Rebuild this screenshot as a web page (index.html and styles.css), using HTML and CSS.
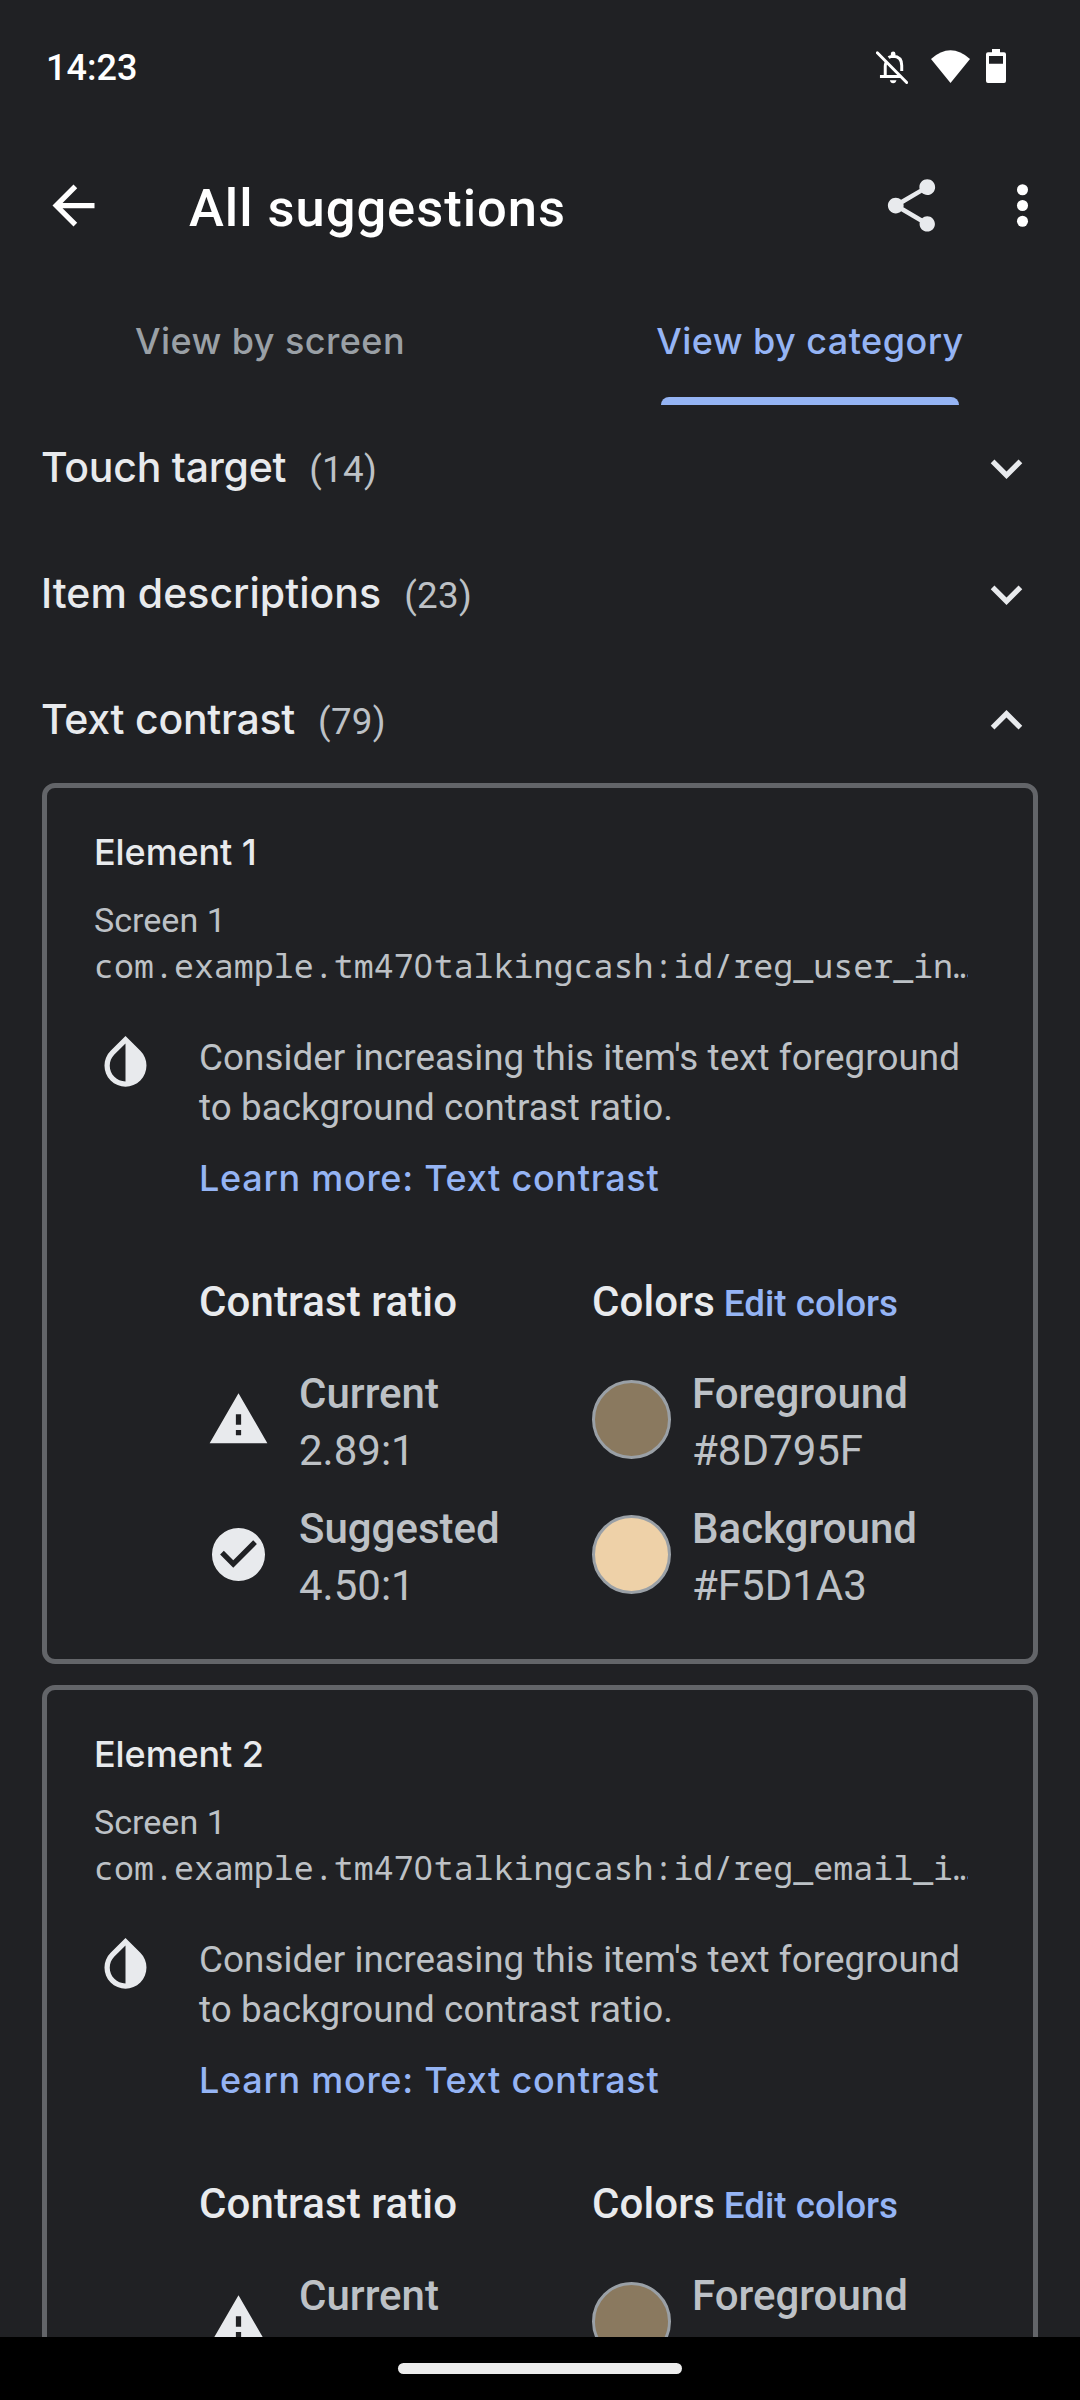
FILE: index.html
```html
<!DOCTYPE html>
<html lang="en">
<head>
<meta charset="utf-8">
<title>All suggestions</title>
<link rel="stylesheet" href="styles.css">
</head>
<body>
<svg width="0" height="0" class="symbols" aria-hidden="true">
  <symbol id="drop" viewBox="0 0 24 24"><path d="M17.66 7.93L12 2.27 6.34 7.93c-3.12 3.12-3.12 8.19 0 11.31C7.9 20.8 9.95 21.58 12 21.58s4.1-.78 5.66-2.34c3.12-3.12 3.12-8.19 0-11.31zM12 19.59c-1.6 0-3.11-.62-4.24-1.76C6.62 16.69 6 15.19 6 13.59s.62-3.11 1.76-4.24L12 5.1v14.49z"/></symbol>
  <symbol id="warning" viewBox="0 0 24 24"><path d="M1 21h22L12 2 1 21zm12-3h-2v-2h2v2zm0-4h-2v-4h2v4z"/></symbol>
  <symbol id="check" viewBox="0 0 24 24"><path fill-rule="evenodd" d="M12 1.9a10.1 10.1 0 1 0 0 20.200a10.1 10.1 0 1 0 0-20.200zM10 17l-5-5 1.410-1.410L10 14.170l7.590-7.590L19 8l-9 9z"/></symbol>
  <symbol id="expand" viewBox="0 0 24 24"><path d="M16.590 8.590L12 13.170 7.410 8.590 6 10l6 6 6-6z"/></symbol>
  <symbol id="collapse" viewBox="0 0 24 24"><path d="M12 8l-6 6 1.410 1.410L12 10.830l4.590 4.580L18 14z"/></symbol>
</svg>

<div class="phone">
  <header class="status">
    <span class="status__time">14:23</span>
    <svg class="status__bell" viewBox="108 92 97 99"><g fill="none" stroke="#fff" stroke-width="9"><path d="M112 97L201 187" stroke-linecap="round"/><path d="M136 166V138q0-7 3-13M120 168.500H184M146 111.500q6-4 14-4 26 1 26 28V152"/></g><path fill="#fff" d="M153 104v-4a7 7 0 0 1 14 0v4zM150 180h20q-2 9-10 9t-10-9z"/></svg>
    <svg class="status__wifi" viewBox="273 86 117 99"><path fill="#fff" d="M273 113Q331.500 61 390 113L331.500 185z"/></svg>
    <svg class="status__battery" viewBox="438 87 60 102"><path fill="#fff" fill-rule="evenodd" d="M456 87h24v10h12q6 0 6 6v80q0 6-6 6h-48q-6 0-6-6v-80q0-6 6-6h12zM447 108v23h42v-23z"/></svg>
  </header>

  <div class="appbar">
    <svg class="icon icon--white" viewBox="0 0 24 24"><path d="M20 11H7.830l5.590-5.590L12 4l-8 8 8 8 1.410-1.410L7.830 13H20v-2z"/></svg>
    <h1 class="appbar__title">All suggestions</h1>
    <svg class="icon" viewBox="0 0 24 24"><path d="M18 16.080c-.76 0-1.440.3-1.960.77L8.910 12.700c.05-.23.09-.46.09-.7s-.04-.47-.09-.7l7.050-4.110c.54.5 1.250.81 2.040.81 1.660 0 3-1.340 3-3s-1.340-3-3-3-3 1.340-3 3c0 .24.04.47.09.7L8.040 9.810C7.500 9.310 6.790 9 6 9c-1.660 0-3 1.340-3 3s1.340 3 3 3c.79 0 1.500-.31 2.040-.81l7.120 4.160c-.05.21-.08.43-.08.65 0 1.610 1.310 2.920 2.920 2.920s2.920-1.310 2.920-2.920-1.310-2.920-2.920-2.920z"/></svg>
    <svg class="icon icon--white icon--more" viewBox="0 0 24 24"><circle cx="12" cy="6" r="2.100"/><circle cx="12" cy="12" r="2.100"/><circle cx="12" cy="18" r="2.100"/></svg>
  </div>

  <nav class="tabs">
    <span class="tab">View by screen</span>
    <span class="tab tab--active">View by category</span>
  </nav>

  <main class="content">
    <div class="group"><h2 class="group__title">Touch target</h2><span class="group__count">(14)</span><svg class="icon group__arrow"><use href="#expand"/></svg></div>
    <div class="group"><h2 class="group__title group__title--long">Item descriptions</h2><span class="group__count">(23)</span><svg class="icon group__arrow"><use href="#expand"/></svg></div>
    <div class="group"><h2 class="group__title">Text contrast</h2><span class="group__count">(79)</span><svg class="icon group__arrow"><use href="#collapse"/></svg></div>

    <article class="card">
      <h3 class="card__title">Element 1</h3>
      <p class="card__screen">Screen 1</p>
      <p class="card__id">com.example.tm47<span class="zero">0</span>talkingcash:id/reg_user_in…</p>
      <div class="advice">
        <svg class="icon"><use href="#drop"/></svg>
        <p class="advice__text">Consider increasing this item's text foreground<br>to background contrast ratio.</p>
      </div>
      <a class="learn">Learn more: Text contrast</a>
      <div class="facts">
        <h4 class="facts__head">Contrast ratio</h4>
        <h4 class="facts__head">Colors<a class="facts__edit">Edit colors</a></h4>
        <div class="fact"><svg class="icon fact__icon"><use href="#warning"/></svg><p><b>Current</b><br>2.89:1</p></div>
        <div class="fact"><i class="swatch swatch--fg"></i><p><b>Foreground</b><br>#8D795F</p></div>
        <div class="fact"><svg class="icon fact__icon"><use href="#check"/></svg><p><b>Suggested</b><br>4.50:1</p></div>
        <div class="fact"><i class="swatch swatch--bg"></i><p><b>Background</b><br>#F5D1A3</p></div>
      </div>
    </article>

    <article class="card">
      <h3 class="card__title">Element 2</h3>
      <p class="card__screen">Screen 1</p>
      <p class="card__id">com.example.tm47<span class="zero">0</span>talkingcash:id/reg_email_i…</p>
      <div class="advice">
        <svg class="icon"><use href="#drop"/></svg>
        <p class="advice__text">Consider increasing this item's text foreground<br>to background contrast ratio.</p>
      </div>
      <a class="learn">Learn more: Text contrast</a>
      <div class="facts">
        <h4 class="facts__head">Contrast ratio</h4>
        <h4 class="facts__head">Colors<a class="facts__edit">Edit colors</a></h4>
        <div class="fact"><svg class="icon fact__icon"><use href="#warning"/></svg><p><b>Current</b><br>2.89:1</p></div>
        <div class="fact"><i class="swatch swatch--fg"></i><p><b>Foreground</b><br>#8D795F</p></div>
      </div>
    </article>
  </main>

  <footer class="navbar"><span class="navbar__pill"></span></footer>
</div>
</body>
</html>
```
FILE: styles.css
```css
* { box-sizing: border-box; margin: 0; padding: 0; }
body { background: #202124; color: #e8eaed; font-family: Roboto, sans-serif; }
.symbols { display: none; }
.phone { display: flex; flex-direction: column; width: 1080px; height: 2400px; overflow: hidden; }
.icon { flex: none; width: 63px; height: 63px; fill: #e8eaed; }
.icon--white { fill: #fff; }

.status { flex: none; display: flex; align-items: center; height: 132px; padding: 0 74px 0 46px; color: #fff; }
.status__time { flex: 1; padding-top: 3px; font-size: 36px; font-weight: 500; line-height: 130px; }
.status__bell { width: 32px; height: 33px; margin: 2px 23px 0 0; }
.status__wifi { width: 39px; height: 33px; margin-right: 16px; }
.status__battery { width: 20px; height: 34px; }

.appbar { flex: none; display: flex; align-items: center; height: 147px; padding: 0 26px 0 42px; }
.appbar__title { flex: 1; padding: 4px 0 0 84px; color: #fff; font-size: 52.5px; font-weight: 500; line-height: 62px; letter-spacing: .97px; }
.icon--more { margin-left: 48px; }

.tabs { flex: none; display: flex; height: 126px; font: 500 36px/124px Inter, sans-serif; letter-spacing: .45px; color: #9aa0a6; }
.tab { position: relative; flex: 1; text-align: center; }
.tab--active { color: #95b4f4; }
.tab--active::after { content: ""; position: absolute; left: 121px; right: 121px; bottom: 0; height: 8px; border-radius: 8px 8px 0 0; background: #95b4f4; }

.content { flex: 1; min-height: 0; overflow: hidden; }
.group { display: flex; align-items: baseline; height: 126px; padding: 0 42px 0 41px; }
.group__title { font: 500 41px/124px Inter, sans-serif; letter-spacing: -.25px; }
.group__title--long { letter-spacing: .02px; }
.group__count { margin-left: 23px; color: #bdc1c6; font-size: 36.75px; line-height: 50px; letter-spacing: .3px; }
.group__arrow { align-self: flex-start; margin: 32px 0 0 auto; }

.card { height: 881px; margin: 0 42px 21px; padding: 39px 45px 45px 47px; border: 5px solid #636569; border-radius: 13px; color: #bdc1c6; }
.card__title { color: #e8eaed; font: 500 36px/50px Inter, sans-serif; letter-spacing: -.1px; }
.card__screen { margin-top: 21px; font-size: 34.1px; line-height: 44px; }
.card__id { width: 874px; overflow: hidden; font: 33.3px/47px "Noto Sans Mono", "DejaVu Sans Mono", monospace; white-space: nowrap; }
.zero { display: inline-block; width: 20px; font-family: "Noto Sans", sans-serif; line-height: 40px; }
.advice { display: flex; gap: 42px; margin-top: 41px; }
.advice__text { padding-top: 3px; font-size: 36.75px; line-height: 50px; letter-spacing: .08px; white-space: nowrap; }
.learn { display: block; margin: 20px 0 0 105px; color: #95b4f4; font: 500 36px/50px Inter, sans-serif; letter-spacing: .72px; }

.facts { display: grid; grid-template-columns: 393px 1fr; row-gap: 21px; margin: 74px 0 0 105px; }
.facts__head { height: 50px; margin-bottom: 17px; color: #e8eaed; font-size: 42px; font-weight: 500; line-height: 50px; letter-spacing: .1px; }
.facts__edit { margin-left: 9px; color: #95b4f4; font-size: 36.75px; letter-spacing: 0; }
.fact { display: flex; align-items: center; height: 114px; font-size: 42px; line-height: 57px; }
.fact b { font-weight: 500; }
.fact__icon { margin: 0 29px 5px 8px; }
.swatch { flex: none; width: 79px; height: 79px; margin: 0 21px 5px 0; border: 3px solid #9aa0a6; border-radius: 50%; }
.swatch--fg { background: #8a795f; }
.swatch--bg { background: #eed1a8; }

.navbar { flex: none; display: flex; justify-content: center; height: 63px; padding-top: 26px; background: #000; }
.navbar__pill { width: 284px; height: 11px; border-radius: 6px; background: #ececec; }
```
